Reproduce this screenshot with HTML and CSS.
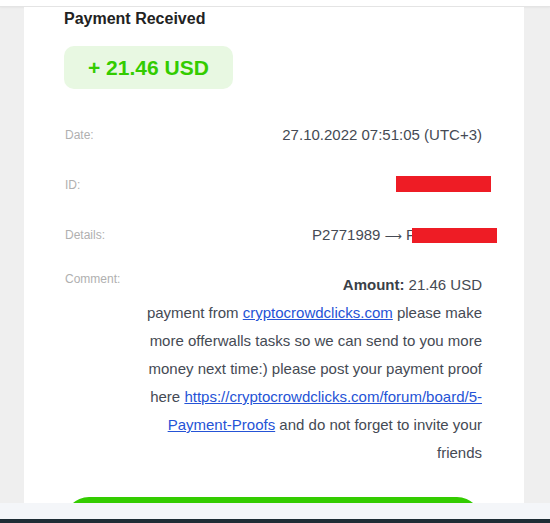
FILE: index.html
```html
<!DOCTYPE html>
<html lang="en">
<head>
<meta charset="utf-8">
<title>Payment Received</title>
<link rel="stylesheet" href="styles.css">
</head>
<body>
  <header class="topbar"></header>
  <div class="page">
    <main class="card">
      <h1 class="title">Payment Received</h1>
      <div class="amount-badge">+ 21.46 USD</div>
      <dl class="details">
        <div class="row">
          <dt class="label">Date:</dt>
          <dd class="value">27.10.2022 07:51:05 (UTC+3)</dd>
        </div>
        <div class="row">
          <dt class="label">ID:</dt>
          <dd class="value"><span class="redact redact-id"></span></dd>
        </div>
        <div class="row">
          <dt class="label">Details:</dt>
          <dd class="value">P2771989 <span class="arrow">⟶</span> P<span class="redact redact-details"></span></dd>
        </div>
        <div class="row row-top">
          <dt class="label">Comment:</dt>
          <dd class="value comment"><strong>Amount:</strong> 21.46 USD<br>payment from <a href="#" class="link">cryptocrowdclicks.com</a> please make more offerwalls tasks so we can send to you more money next time:) please post your payment proof here <a href="#" class="link">https://cryptocrowdclicks.com/forum/board/5-Payment-Proofs</a> and do not forget to invite your friends</dd>
        </div>
      </dl>
      <a href="#" class="btn"></a>
    </main>
  </div>
  <div class="footer-light"></div>
  <div class="footer-dark"></div>
</body>
</html>
```

FILE: styles.css
```css
html, body {
  margin: 0;
  padding: 0;
}

body {
  background: #efefef;
  font-family: "Liberation Sans", Arial, sans-serif;
  color: #454a54;
}

.topbar {
  height: 6px;
  background: #ffffff;
  border-bottom: 1px solid #e4e4e4;
  box-shadow: 0 1px 2px rgba(0, 0, 0, 0.04);
}

.page {
  display: flex;
  padding: 0 26px 0 24px;
}

.card {
  flex: 1;
  background: #ffffff;
  padding: 3px 42px 60px 40px;
}

.title {
  margin: 0;
  font-size: 16px;
  line-height: 18px;
  font-weight: 700;
  color: #222222;
}

.amount-badge {
  width: fit-content;
  margin-top: 18px;
  padding: 10px 24px 9px 24px;
  background: #e8f8e2;
  border-radius: 10px;
  color: #33cc00;
  font-size: 21px;
  line-height: 24px;
  font-weight: 700;
}

.details {
  margin: 32px 0 0 0;
  display: flex;
  flex-direction: column;
  gap: 22px;
}

.row {
  display: flex;
  justify-content: space-between;
  align-items: center;
}

.row-top {
  align-items: flex-start;
}

.label {
  flex: 0 0 auto;
  padding-left: 1px;
  font-size: 12px;
  line-height: 14px;
  color: #b0b0b0;
}

.row-top .label {
  padding-top: 1px;
}

.value {
  margin: 0;
  font-size: 15px;
  line-height: 28px;
  text-align: right;
  color: #454a54;
}

.arrow {
  font-family: "DejaVu Sans", sans-serif;
  font-size: 12px;
  line-height: 1;
}

.comment {
  width: 350px;
}

.comment strong {
  color: #3a3f48;
}

.link {
  color: #2553d6;
  text-decoration: underline;
}

.redact {
  display: inline-block;
  background: #ee1c25;
}

.redact-id {
  width: 95px;
  height: 16px;
  margin-right: -9px;
  vertical-align: -2px;
}

.redact-details {
  width: 85px;
  height: 15px;
  margin-left: -4px;
  margin-right: -15px;
  vertical-align: -3px;
}

.btn {
  display: block;
  margin-top: 30px;
  height: 50px;
  border-radius: 25px;
  background: #33cc00;
}

.footer-light {
  position: fixed;
  left: 0;
  right: 0;
  bottom: 4px;
  height: 16px;
  background: #f4f6f9;
}

.footer-dark {
  position: fixed;
  left: 0;
  right: 0;
  bottom: 0;
  height: 4px;
  background: #1e2d35;
}
```
